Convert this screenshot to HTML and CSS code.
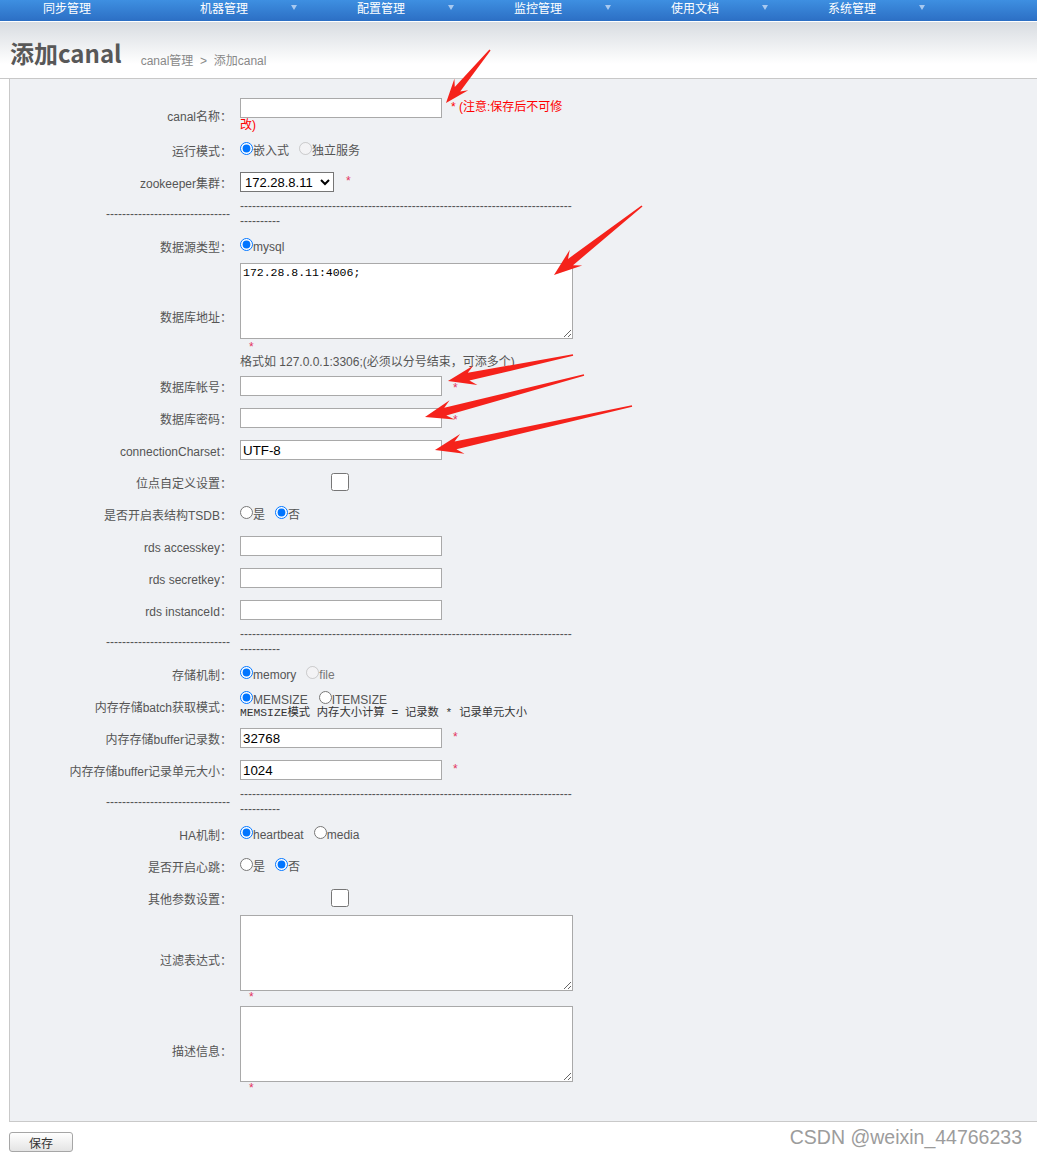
FILE: index.html
```html
<!DOCTYPE html>
<html lang="zh-CN">
<head>
    <meta charset="UTF-8">
    <meta name="viewport" content="width=device-width, initial-scale=1.0">
    <title>添加canal</title>
    <link rel="stylesheet" href="styles.css">
</head>
<body>

    <!-- Top menu -->
    <div class="topnav">
        <div class="nav-item">同步管理</div>
        <div class="nav-item">机器管理<span class="caret"></span></div>
        <div class="nav-item">配置管理<span class="caret"></span></div>
        <div class="nav-item">监控管理<span class="caret"></span></div>
        <div class="nav-item">使用文档<span class="caret"></span></div>
        <div class="nav-item">系统管理<span class="caret"></span></div>
    </div>

    <div class="page-header">
        <h1>添加canal</h1>
        <span class="crumbs">canal管理&nbsp; &gt; &nbsp;添加canal</span>
    </div>

    <form class="form-panel">
        <div class="row">
            <label class="label">canal名称：</label>
            <div class="field"><input type="text" class="text"><span class="note">* (注意:保存后不可修改)</span></div>
        </div>
        <div class="row">
            <label class="label">运行模式：</label>
            <div class="field"><label class="opt"><input type="radio" name="runMode" checked>嵌入式</label><label class="opt"><input type="radio" name="runMode" disabled>独立服务</label></div>
        </div>
        <div class="row">
            <label class="label">zookeeper集群：</label>
            <div class="field">
                <select class="select"><option>172.28.8.11</option></select><span class="req zk">*</span>
            </div>
        </div>
        <div class="row">
            <div class="label sep">-------------------------------</div>
            <div class="field dashes">---------------------------------------------------------------------------------------------</div>
        </div>

        <div class="row">
            <label class="label">数据源类型：</label>
            <div class="field"><label class="opt"><input type="radio" name="sourceType" checked>mysql</label></div>
        </div>
        <div class="row">
            <label class="label">数据库地址：</label>
            <div class="field">
                <textarea class="area">172.28.8.11:4006;</textarea>
                <div class="req-line tall">*</div>
                <div class="hint">格式如 127.0.0.1:3306;(必须以分号结束，可添多个)</div>
            </div>
        </div>
        <div class="row">
            <label class="label">数据库帐号：</label>
            <div class="field"><input type="text" class="text"><span class="req low">*</span></div>
        </div>
        <div class="row">
            <label class="label">数据库密码：</label>
            <div class="field"><input type="password" class="text"><span class="req low">*</span></div>
        </div>
        <div class="row">
            <label class="label">connectionCharset：</label>
            <div class="field"><input type="text" class="text" value="UTF-8"></div>
        </div>
        <div class="row">
            <label class="label">位点自定义设置：</label>
            <div class="field"><input type="checkbox" class="check"></div>
        </div>
        <div class="row">
            <label class="label">是否开启表结构TSDB：</label>
            <div class="field"><label class="opt"><input type="radio" name="tsdb">是</label><label class="opt"><input type="radio" name="tsdb" checked>否</label></div>
        </div>
        <div class="row">
            <label class="label">rds accesskey：</label>
            <div class="field"><input type="text" class="text"></div>
        </div>
        <div class="row">
            <label class="label">rds secretkey：</label>
            <div class="field"><input type="text" class="text"></div>
        </div>
        <div class="row">
            <label class="label">rds instanceId：</label>
            <div class="field"><input type="text" class="text"></div>
        </div>
        <div class="row">
            <div class="label sep">-------------------------------</div>
            <div class="field dashes">---------------------------------------------------------------------------------------------</div>
        </div>

        <div class="row">
            <label class="label">存储机制：</label>
            <div class="field"><label class="opt"><input type="radio" name="storage" checked>memory</label><label class="opt off"><input type="radio" name="storage" disabled>file</label></div>
        </div>
        <div class="row">
            <label class="label">内存存储batch获取模式：</label>
            <div class="field">
                <div class="radio-line"><label class="opt wide"><input type="radio" name="batchMode" checked>MEMSIZE</label><label class="opt"><input type="radio" name="batchMode">ITEMSIZE</label></div>
                <div class="mono">MEMSIZE模式 内存大小计算 = 记录数 * 记录单元大小</div>
            </div>
        </div>
        <div class="row">
            <label class="label">内存存储buffer记录数：</label>
            <div class="field"><input type="text" class="text" value="32768"><span class="req">*</span></div>
        </div>
        <div class="row">
            <label class="label">内存存储buffer记录单元大小：</label>
            <div class="field"><input type="text" class="text" value="1024"><span class="req">*</span></div>
        </div>
        <div class="row">
            <div class="label sep">-------------------------------</div>
            <div class="field dashes">---------------------------------------------------------------------------------------------</div>
        </div>

        <div class="row">
            <label class="label">HA机制：</label>
            <div class="field"><label class="opt"><input type="radio" name="ha" checked>heartbeat</label><label class="opt"><input type="radio" name="ha">media</label></div>
        </div>
        <div class="row">
            <label class="label">是否开启心跳：</label>
            <div class="field"><label class="opt"><input type="radio" name="heartbeat">是</label><label class="opt"><input type="radio" name="heartbeat" checked>否</label></div>
        </div>
        <div class="row">
            <label class="label">其他参数设置：</label>
            <div class="field"><input type="checkbox" class="check"></div>
        </div>
        <div class="row">
            <label class="label">过滤表达式：</label>
            <div class="field">
                <textarea class="area"></textarea>
                <div class="req-line short">*</div>
            </div>
        </div>
        <div class="row">
            <label class="label">描述信息：</label>
            <div class="field">
                <textarea class="area"></textarea>
                <div class="req-line short">*</div>
            </div>
        </div>
    </form>

    <div class="footer">
        <button class="btn" type="button">保存</button>
        <span class="csdn">CSDN @weixin_44766233</span>
    </div>

    <!-- red arrows drawn over the screenshot -->
    <svg class="marks" width="1037" height="480" viewBox="0 0 1037 480">
        <g fill="#f5221b">
            <polygon points="489.4,49.5 454.8,87 454.4,78.8 446,103 468.2,90.3 460.2,91.4 490.6,50.5"/>
            <polygon points="641.5,205.4 568,258.9 569.8,249.8 554,275 582.2,265.6 573,265.2 642.5,206.6"/>
            <polygon points="572.8,354.2 467.8,372.8 473.4,365.5 448,381 477.4,385.1 469.4,380.6 573.2,355.8"/>
            <polygon points="583.8,374.2 444.3,407.7 449.6,400.2 425,417 454.7,419.6 446.3,415.5 584.2,375.8"/>
            <polygon points="631.8,405.2 454.6,441.5 460.1,434.1 435,450 464.5,453.7 456.4,449.3 632.2,406.8"/>
        </g>
    </svg>

</body>
</html>
```

FILE: styles.css
```css
/* Global */
body {
    margin: 0;
    font-family: "Liberation Sans", "Noto Sans CJK SC", sans-serif;
    font-size: 12px;
    color: #555;
    background-color: #fff;
    position: relative;
}

/* Top menu */
.topnav {
    display: flex;
    height: 21px;
    border-bottom: 1px solid #fff;
    background: linear-gradient(#3e8fe1, #2c6fc4);
}

.nav-item {
    display: flex;
    align-items: center;
    width: 157px;
    box-sizing: border-box;
    padding: 0 17px 6px 43px;
    color: #fff;
    font-family: "Noto Sans CJK SC", sans-serif;
    font-size: 12px;
}

.caret {
    margin-left: auto;
    border-left: 3.5px solid transparent;
    border-right: 3.5px solid transparent;
    border-top: 5px solid #a8c9f0;
}

/* Page title */
.page-header {
    display: flex;
    align-items: flex-start;
    height: 57px;
    box-sizing: border-box;
    padding: 16px 0 0 10px;
    border-bottom: 1px solid #c8c8c8;
    background: linear-gradient(#d8dce1, #fff 75%);
}

.page-header h1 {
    margin: 0;
    font-family: "Noto Sans CJK SC", sans-serif;
    font-size: 24px;
    line-height: 30px;
    font-weight: bold;
    color: #585858;
}

.crumbs {
    margin: 16px 0 0 19px;
    line-height: 15px;
    color: #888;
}

/* Form */
.form-panel {
    margin: 0 0 0 9px;
    padding: 19px 0 24px;
    border-left: 1px solid #c9c9c9;
    border-bottom: 1px solid #c9c9c9;
    background-color: #eff1f4;
}

.row {
    display: grid;
    grid-template-columns: 230px 333px;
    align-items: center;
    min-height: 30px;
    margin-bottom: 2px;
}

.label {
    text-align: right;
    padding-right: 8px;
    color: #555;
}

.label.sep {
    padding-right: 10px;
}

.field {
    line-height: 15px;
    color: #555;
}

.dashes {
    word-break: break-all;
}

.text {
    width: 202px;
    height: 20px;
    box-sizing: border-box;
    padding: 1px 2px;
    border: 1px solid #a9a9a9;
    font-family: "Liberation Sans", sans-serif;
    font-size: 13.33px;
    color: #000;
    vertical-align: middle;
}

.select {
    width: 94px;
    height: 20px;
    border: 1px solid #767676;
    border-radius: 0;
    background-color: #fff;
    font-family: "Liberation Sans", sans-serif;
    font-size: 13px;
    color: #000;
    vertical-align: middle;
}

.area {
    display: block;
    width: 333px;
    height: 76px;
    box-sizing: border-box;
    margin: 0;
    padding: 2px;
    border: 1px solid #a9a9a9;
    font-family: "Liberation Mono", monospace;
    font-size: 11.5px;
    color: #000;
}

.hint {
    line-height: 13px;
}

.check {
    width: 18px;
    height: 18px;
    margin: 0 0 0 91px;
    vertical-align: middle;
}

.radio-line {
    height: 15px;
}

.opt {
    margin-right: 10px;
}

.opt.wide {
    margin-right: 11px;
}

.opt input {
    margin: 0;
}

.opt.off {
    color: #777;
}

.note {
    margin-left: 9px;
    color: #f00;
}

.req {
    margin-left: 11px;
    color: #e3335e;
}

.req.zk {
    margin-left: 12px;
}

.req.low {
    vertical-align: -3px;
}

.req-line {
    padding-left: 9px;
    height: 15px;
    color: #e3335e;
}

.req-line.tall {
    height: 17px;
    line-height: 17px;
}

.req-line.short {
    height: 13px;
    line-height: 13px;
}

.mono {
    font-family: "Liberation Mono", "Noto Sans CJK SC", monospace;
    font-size: 11.3px;
    color: #333;
}

/* Bottom bar */
.footer {
    display: flex;
    justify-content: space-between;
    align-items: flex-start;
    padding: 10px 15px 0 9px;
}

.btn {
    width: 64px;
    height: 20px;
    padding: 0;
    border: 1px solid #a6a6a6;
    border-radius: 3px;
    background: linear-gradient(#fff, #e4e4e4);
    font-family: "Noto Sans CJK SC", sans-serif;
    font-size: 12px;
    color: #333;
}

.csdn {
    margin-top: -6px;
    font-size: 19.5px;
    line-height: 22px;
    color: #9c9c9c;
    text-shadow: 0 0 1px #fff;
}

.marks {
    position: absolute;
    top: 0;
    left: 0;
    pointer-events: none;
}
```
